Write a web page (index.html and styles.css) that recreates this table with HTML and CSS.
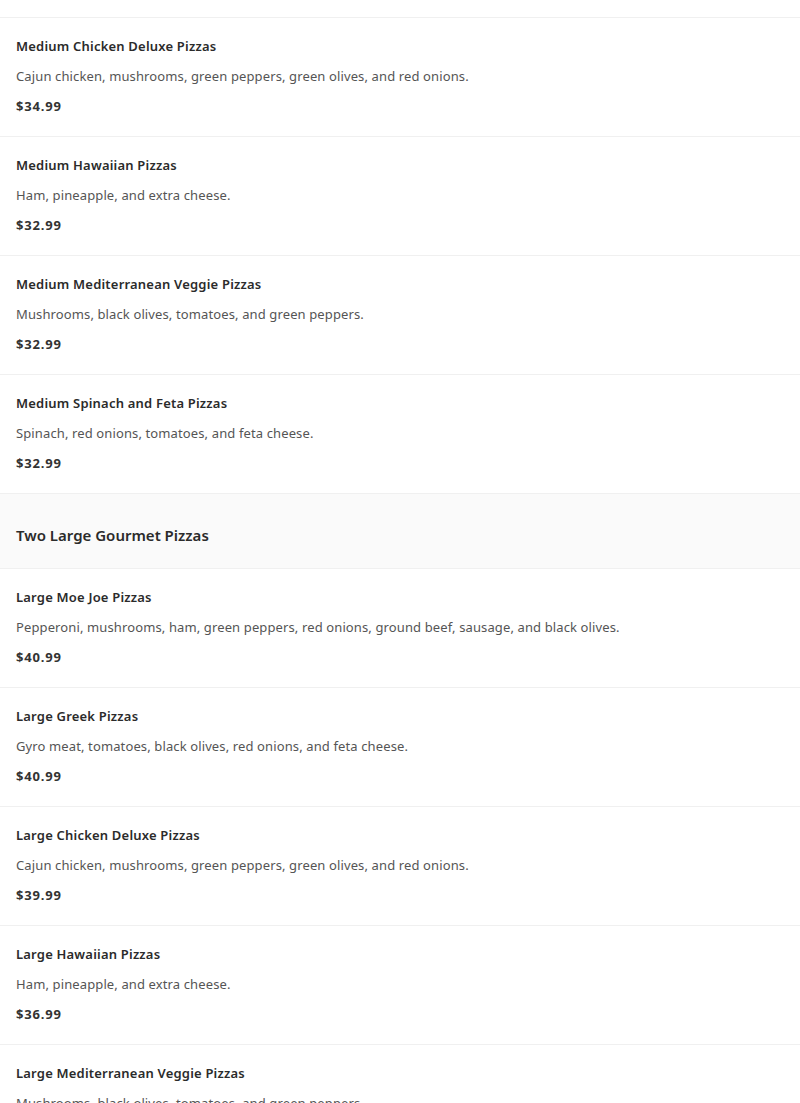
FILE: index.html
```
<!DOCTYPE html>
<html lang="en">
<head>
    <meta charset="UTF-8">
    <meta name="viewport" content="width=device-width, initial-scale=1.0">
    <title>Menu</title>
    <link rel="stylesheet" href="styles.css">
</head>
<body>
    <div class="menu">
        <div class="item item-cut"></div>

        <div class="item">
            <div class="item-name">Medium Chicken Deluxe Pizzas</div>
            <div class="item-desc">Cajun chicken, mushrooms, green peppers, green olives, and red onions.</div>
            <div class="item-price">$34.99</div>
        </div>
        <div class="item">
            <div class="item-name">Medium Hawaiian Pizzas</div>
            <div class="item-desc">Ham, pineapple, and extra cheese.</div>
            <div class="item-price">$32.99</div>
        </div>
        <div class="item">
            <div class="item-name">Medium Mediterranean Veggie Pizzas</div>
            <div class="item-desc">Mushrooms, black olives, tomatoes, and green peppers.</div>
            <div class="item-price">$32.99</div>
        </div>
        <div class="item">
            <div class="item-name">Medium Spinach and Feta Pizzas</div>
            <div class="item-desc">Spinach, red onions, tomatoes, and feta cheese.</div>
            <div class="item-price">$32.99</div>
        </div>

        <div class="section-title">Two Large Gourmet Pizzas</div>

        <div class="item">
            <div class="item-name">Large Moe Joe Pizzas</div>
            <div class="item-desc">Pepperoni, mushrooms, ham, green peppers, red onions, ground beef, sausage, and black olives.</div>
            <div class="item-price">$40.99</div>
        </div>
        <div class="item">
            <div class="item-name">Large Greek Pizzas</div>
            <div class="item-desc">Gyro meat, tomatoes, black olives, red onions, and feta cheese.</div>
            <div class="item-price">$40.99</div>
        </div>
        <div class="item">
            <div class="item-name">Large Chicken Deluxe Pizzas</div>
            <div class="item-desc">Cajun chicken, mushrooms, green peppers, green olives, and red onions.</div>
            <div class="item-price">$39.99</div>
        </div>
        <div class="item">
            <div class="item-name">Large Hawaiian Pizzas</div>
            <div class="item-desc">Ham, pineapple, and extra cheese.</div>
            <div class="item-price">$36.99</div>
        </div>
        <div class="item">
            <div class="item-name">Large Mediterranean Veggie Pizzas</div>
            <div class="item-desc">Mushrooms, black olives, tomatoes, and green peppers.</div>
            <div class="item-price">$36.99</div>
        </div>
    </div>
</body>
</html>
```

FILE: styles.css
```
body {
    font-family: "Noto Sans", "Open Sans", sans-serif;
    margin: 0;
    background: #fff;
    color: #333;
}
.menu {
    display: flex;
    flex-direction: column;
}
.item {
    padding: 18px 16px 20px;
    border-bottom: 1px solid #f0f0f0;
    display: flex;
    flex-direction: column;
    gap: 10px;
}
.item-cut {
    height: 18px;
    padding: 0;
    box-sizing: border-box;
}
.item-name {
    font-size: 13px;
    line-height: 20px;
    font-weight: 600;
    letter-spacing: 0.2px;
    color: #2b2b2b;
}
.item-desc {
    font-size: 13px;
    line-height: 20px;
    letter-spacing: 0.12px;
    color: #555;
}
.item-price {
    font-size: 13px;
    line-height: 20px;
    font-weight: 700;
    letter-spacing: 0.8px;
    color: #333;
}
.section-title {
    background: #fafafa;
    border-bottom: 1px solid #f0f0f0;
    padding: 30px 16px 22px;
    font-size: 15px;
    line-height: 22px;
    font-weight: 600;
    color: #2b2b2b;
}
```
